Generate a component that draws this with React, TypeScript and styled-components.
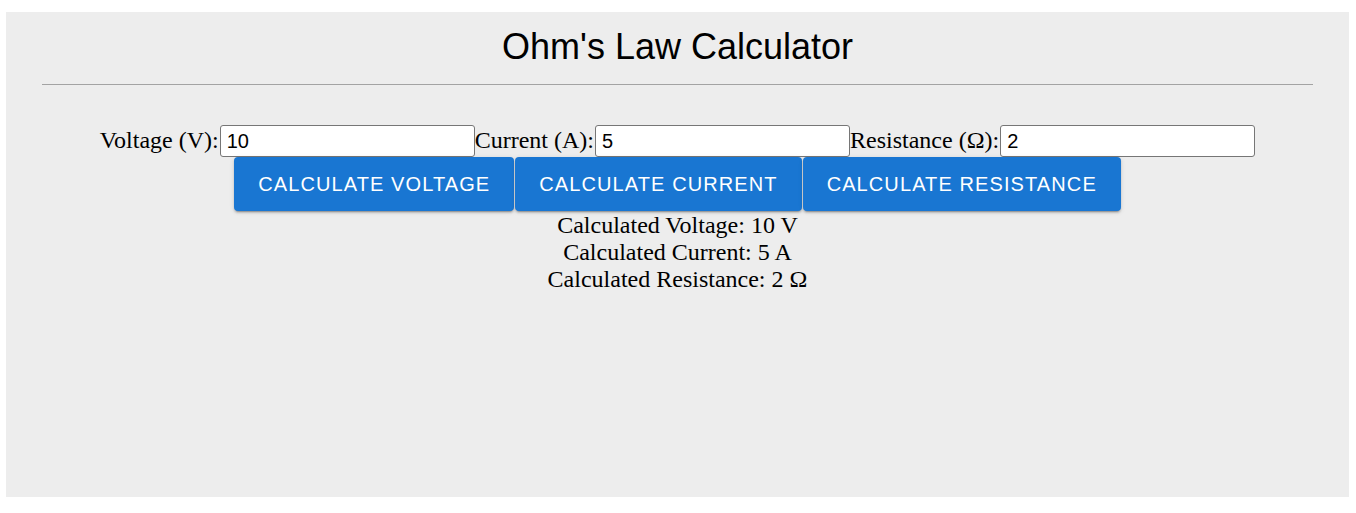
import styled, { createGlobalStyle } from "styled-components";

const GlobalStyle = createGlobalStyle`
  html, body {
    margin: 0;
    padding: 0;
    background: #ffffff;
  }
  * {
    box-sizing: border-box;
  }
`;

const Panel = styled.div`
  margin: 12px 7px 0 6px;
  height: 485px;
  padding: 14px 36px 0;
  background: #ededed;
  font-family: "Liberation Serif", "Times New Roman", serif;
  color: #000;
`;

const Title = styled.h1`
  margin: 0;
  font-family: "Liberation Sans", Arial, sans-serif;
  font-size: 36px;
  font-weight: 400;
  line-height: 41px;
  text-align: center;
`;

const Divider = styled.hr`
  margin: 17px 0 0;
  border: none;
  border-top: 1px solid #a3a3a3;
`;

const FieldRow = styled.div`
  display: flex;
  justify-content: center;
  align-items: center;
  margin-top: 40px;
`;

const Label = styled.label`
  font-size: 24px;
  line-height: 27px;
  white-space: nowrap;
`;

const Input = styled.input`
  width: 255px;
  height: 32px;
  margin-left: 1px;
  padding: 1px 6px;
  border: 1px solid #767676;
  border-radius: 3px;
  background: #fff;
  font-family: "Liberation Sans", Arial, sans-serif;
  font-size: 20px;
  color: #000;
`;

const ButtonRow = styled.div`
  display: flex;
  justify-content: center;
  gap: 1px;
`;

const Button = styled.button`
  height: 54px;
  padding: 0 24px;
  border: none;
  border-radius: 4px;
  background: #1976d2;
  color: #fff;
  font-family: "Liberation Sans", Arial, sans-serif;
  font-size: 20px;
  letter-spacing: 1.1px;
  text-transform: uppercase;
  box-shadow: 0 3px 1px -2px rgba(0, 0, 0, 0.2), 0 2px 2px 0 rgba(0, 0, 0, 0.14),
    0 1px 5px 0 rgba(0, 0, 0, 0.12);
  cursor: pointer;
`;

const Results = styled.div`
  margin-top: 1px;
  text-align: center;
  font-size: 24px;
  line-height: 27px;
`;

const fields = [
  { label: "Voltage (V):", value: "10" },
  { label: "Current (A):", value: "5" },
  { label: "Resistance (Ω):", value: "2" },
];

const actions = ["Calculate Voltage", "Calculate Current", "Calculate Resistance"];

const results = [
  "Calculated Voltage: 10 V",
  "Calculated Current: 5 A",
  "Calculated Resistance: 2 Ω",
];

export default function App() {
  return (
    <>
      <GlobalStyle />
      <Panel>
        <Title>Ohm's Law Calculator</Title>
        <Divider />
        <FieldRow>
          {fields.map((f) => (
            <Label key={f.label}>
              {f.label}
              <Input type="text" defaultValue={f.value} />
            </Label>
          ))}
        </FieldRow>
        <ButtonRow>
          {actions.map((a) => (
            <Button key={a}>{a}</Button>
          ))}
        </ButtonRow>
        <Results>
          {results.map((r) => (
            <div key={r}>{r}</div>
          ))}
        </Results>
      </Panel>
    </>
  );
}
